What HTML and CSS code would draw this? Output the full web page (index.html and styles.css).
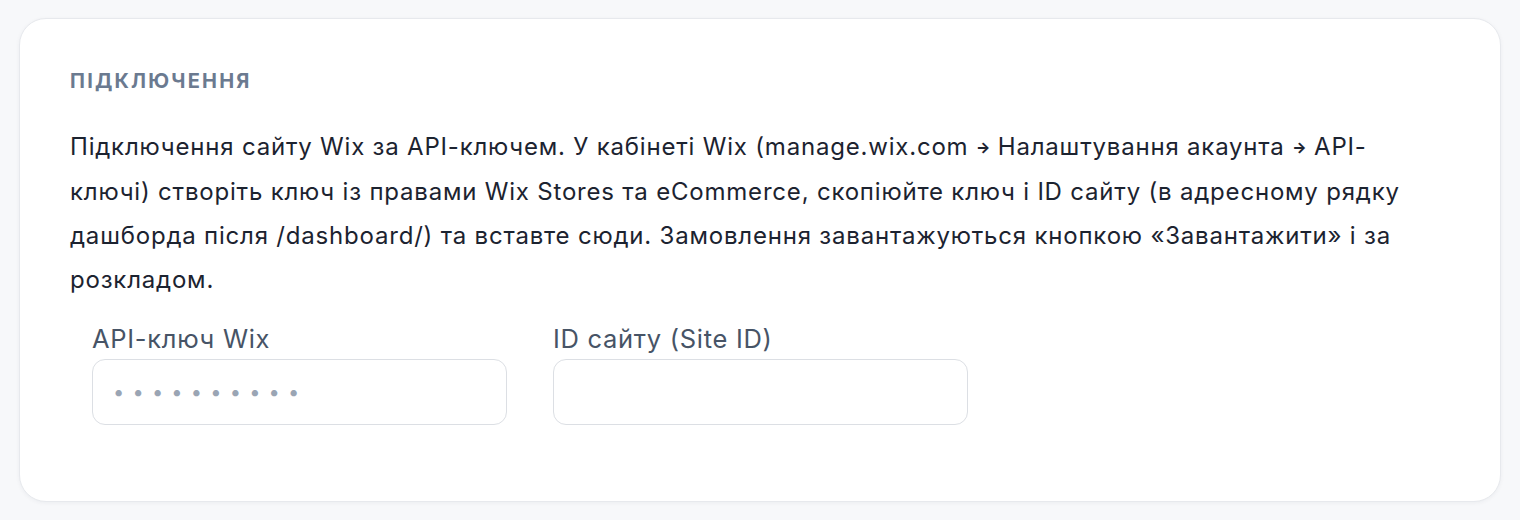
FILE: index.html
```html
<!DOCTYPE html>
<html lang="uk">
<head>
<meta charset="utf-8">
<title>Підключення</title>
<link rel="stylesheet" href="styles.css">
</head>
<body>
<section class="card">
  <h2 class="card-title">Підключення</h2>
  <p class="card-text">Підключення сайту Wix за API-ключем. У кабінеті Wix (manage.wix.com <span class="arr">→</span> Налаштування акаунта <span class="arr">→</span> API-ключі) створіть ключ із правами Wix Stores та eCommerce, скопіюйте ключ і ID сайту (в адресному рядку дашборда після /dashboard/) та вставте сюди. Замовлення завантажуються кнопкою «Завантажити» і за розкладом.</p>
  <div class="fields">
    <label class="field">
      <span class="field-label">API-ключ Wix</span>
      <input class="field-input field-input--secret" type="text" placeholder="••••••••••">
    </label>
    <label class="field">
      <span class="field-label">ID сайту (Site ID)</span>
      <input class="field-input" type="text">
    </label>
  </div>
</section>
</body>
</html>
```
FILE: styles.css
```css
* { box-sizing: border-box; }
html, body {
  margin: 0;
  background: #f7f8fa;
}
body {
  padding: 18px 19px 19px 19px;
  font-family: Inter, "Noto Sans", sans-serif;
  color: #1c2330;
}
.card {
  background: #ffffff;
  border: 1px solid #e7e9ed;
  border-radius: 27px;
  box-shadow: 0 1px 4px rgba(20, 30, 50, 0.05);
  padding: 50px 80px 76px 50px;
}
.card-title {
  margin: 0;
  font-size: 20px;
  line-height: 24px;
  font-weight: 700;
  letter-spacing: 0.11em;
  text-transform: uppercase;
  color: #6b7a90;
}
.card-text {
  margin: 32px 0 0 0;
  font-size: 24px;
  line-height: 44px;
  letter-spacing: 0.8px;
  color: #1c2330;
}
.arr {
  font-size: 15px;
  font-weight: 800;
  letter-spacing: 0;
  vertical-align: 2px;
}
.fields {
  display: flex;
  gap: 46px;
  padding: 0 0 0 22px;
  margin-top: 21px;
}
.field {
  display: flex;
  flex-direction: column;
  width: 415px;
  gap: 4px;
}
.field-label {
  font-size: 25.5px;
  line-height: 32px;
  letter-spacing: 0.7px;
  color: #475466;
}
.field-input {
  height: 66px;
  border: 1.5px solid #dcdfe4;
  border-radius: 13px;
  background: #fff;
  padding: 0 20px;
  font-family: inherit;
  font-size: 20px;
  outline: none;
}
.field-input--secret::placeholder {
  color: #9aa5b4;
  letter-spacing: 8.2px;
  font-size: 20px;
}
```
